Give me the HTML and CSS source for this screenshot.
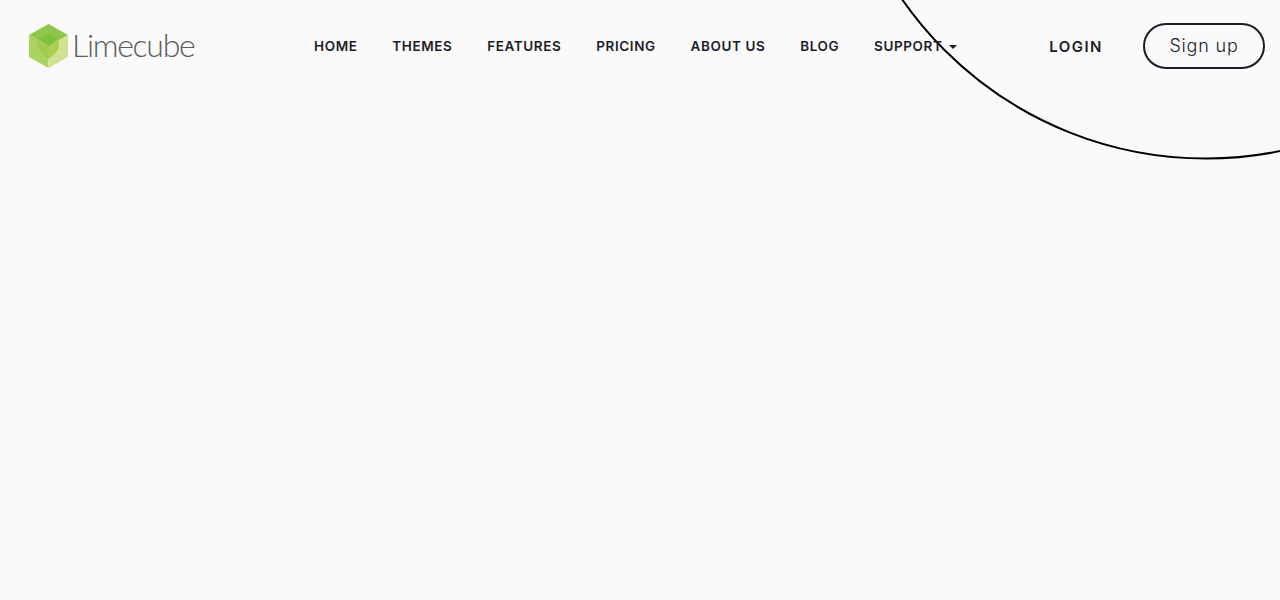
FILE: index.html
```html
<!DOCTYPE html>
<html lang="en">
<head>
  <meta charset="UTF-8" />
  <title>Limecube</title>
  <link rel="stylesheet" href="styles.css">
</head>
<body>

  <!-- decorative ring, hangs off the top right corner -->
  <svg class="ring" width="400" height="170" viewBox="0 0 400 170">
    <circle cx="326" cy="-211" r="369.500" fill="none" stroke="#000" stroke-width="2" />
  </svg>

  <header class="navbar">
    <a class="brand" href="#">
      <svg class="brand-icon" width="40" height="46" viewBox="0 0 40 46">
        <polygon points="19.500,1 39,12 19.500,23 0,12" fill="#8fc74a" />
        <polygon points="0,12 19.500,23 19.500,45 0,34" fill="#abd264" />
        <polygon points="39,12 39,34 19.500,45 19.500,23" fill="#d0e38e" />
        <path d="M19.500 10 L30 16.500 L30 23 Q28 31 19.500 36 Q11 31 9 23 L9 16.500 Z" fill="#9fcb45" opacity="0.8" />
        <polygon points="19.500,10 29,16 19.500,23 10,16" fill="#82bf3c" />
      </svg>
      <span class="brand-name">Limecube</span>
    </a>

    <nav class="menu">
      <a class="menu-link" href="#">HOME</a>
      <a class="menu-link" href="#">THEMES</a>
      <a class="menu-link" href="#">FEATURES</a>
      <a class="menu-link" href="#">PRICING</a>
      <a class="menu-link" href="#">ABOUT US</a>
      <a class="menu-link" href="#">BLOG</a>
      <a class="menu-link" href="#">SUPPORT<span class="caret"></span></a>
    </nav>

    <div class="actions">
      <a class="login" href="#">LOGIN</a>
      <a class="signup" href="#">Sign up</a>
    </div>
  </header>

</body>
</html>
```

FILE: styles.css
```css
html, body {
  height: 100%;
}

body {
  margin: 0;
  background: #fafafa;
  color: #1c1c28;
  font-family: 'Inter', 'Liberation Sans', sans-serif;
  overflow: hidden;
  position: relative;
}

a {
  color: inherit;
  text-decoration: none;
}

.ring {
  position: absolute;
  right: 0;
  top: 0;
}

.navbar {
  position: relative;
  display: flex;
  align-items: center;
  height: 46px;
  padding: 23px 15px 0 29px;
}

.brand {
  display: flex;
  align-items: center;
  width: 285px;
}

.brand-icon {
  display: block;
  flex-shrink: 0;
}

.brand-name {
  margin-left: 3px;
  padding-bottom: 4px;
  font-family: 'Lato', sans-serif;
  font-weight: 300;
  font-size: 32px;
  color: #5c5c5c;
  letter-spacing: -1.3px;
}

.menu {
  display: flex;
  gap: 34.800px;
}

.menu-link {
  font-size: 13.500px;
  font-weight: 600;
  letter-spacing: 0.6px;
  line-height: 18px;
}

.caret {
  display: inline-block;
  margin-left: 7px;
  vertical-align: middle;
  border-top: 4px solid #1c1c28;
  border-left: 4px solid transparent;
  border-right: 4px solid transparent;
}

.actions {
  display: flex;
  align-items: center;
  margin-left: auto;
}

.login {
  font-size: 15px;
  font-weight: 600;
  letter-spacing: 1.500px;
  margin-right: 40px;
}

.signup {
  box-sizing: border-box;
  width: 122px;
  height: 46px;
  line-height: 41px;
  text-align: center;
  border: 2px solid #1c1c28;
  border-radius: 23px;
  font-size: 18px;
  letter-spacing: 0.8px;
  font-weight: 300;
}
```
